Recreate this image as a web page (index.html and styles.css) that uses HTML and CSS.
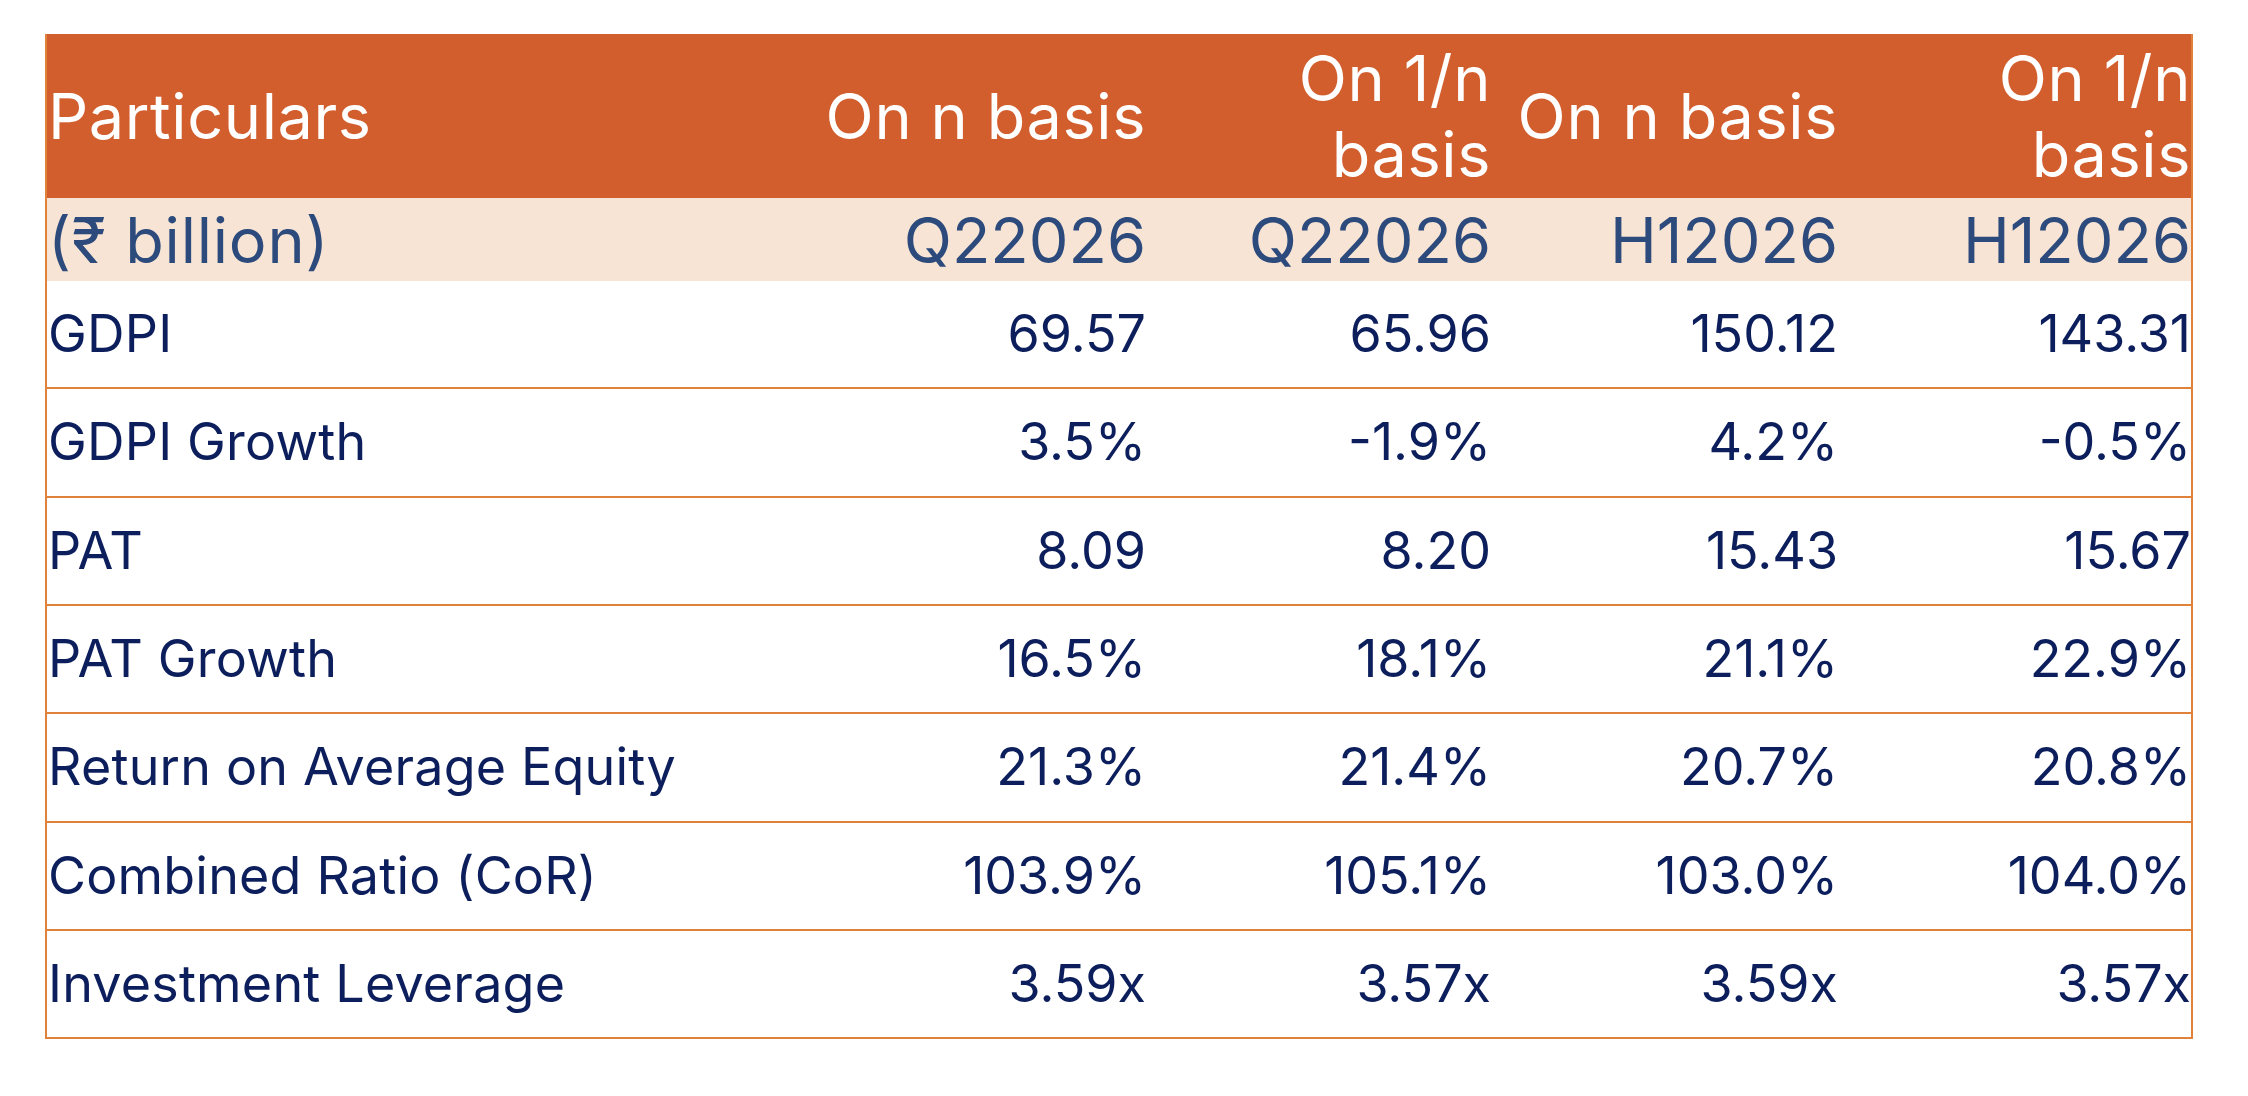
FILE: index.html
```html
<!DOCTYPE html>
<html lang="en">
<head>
<meta charset="utf-8">
<title>Financial Highlights</title>
<link rel="stylesheet" href="styles.css">
</head>
<body>
<div class="page">
  <table class="fin">
    <colgroup>
      <col class="c-label">
      <col class="c-2">
      <col class="c-3">
      <col class="c-4">
      <col class="c-5">
    </colgroup>
    <thead>
      <tr class="head">
        <th class="lbl">Particulars</th>
        <th>On n basis</th>
        <th>On 1/n basis</th>
        <th>On n basis</th>
        <th>On 1/n basis</th>
      </tr>
      <tr class="sub">
        <th class="lbl">(₹ billion)</th>
        <th>Q22026</th>
        <th>Q22026</th>
        <th>H12026</th>
        <th>H12026</th>
      </tr>
    </thead>
    <tbody>
      <tr><td class="lbl">GDPI</td><td>69.57</td><td>65.96</td><td>150.12</td><td>143.31</td></tr>
      <tr><td class="lbl">GDPI Growth</td><td>3.5%</td><td>-1.9%</td><td>4.2%</td><td>-0.5%</td></tr>
      <tr><td class="lbl">PAT</td><td>8.09</td><td>8.20</td><td>15.43</td><td>15.67</td></tr>
      <tr><td class="lbl">PAT Growth</td><td>16.5%</td><td>18.1%</td><td>21.1%</td><td>22.9%</td></tr>
      <tr><td class="lbl">Return on Average Equity</td><td>21.3%</td><td>21.4%</td><td>20.7%</td><td>20.8%</td></tr>
      <tr><td class="lbl">Combined Ratio (CoR)</td><td>103.9%</td><td>105.1%</td><td>103.0%</td><td>104.0%</td></tr>
      <tr><td class="lbl">Investment Leverage</td><td>3.59x</td><td>3.57x</td><td>3.59x</td><td>3.57x</td></tr>
    </tbody>
  </table>
</div>
</body>
</html>
```
FILE: styles.css
```css
html, body {
  margin: 0;
  padding: 0;
  background: #ffffff;
}

.page {
  padding: 34px 0 0 45px;
}

.fin {
  width: 2148px;
  table-layout: fixed;
  border-collapse: separate;
  border-spacing: 0;
  border-left: 2px solid #e0823a;
  border-right: 2px solid #e0823a;
  font-family: "Inter", "Open Sans", sans-serif;
}

.c-label { width: 754px; }
.c-2 { width: 345px; }
.c-3 { width: 345px; }
.c-4 { width: 347px; }
.c-5 { width: 353px; }

.fin th,
.fin td {
  padding: 0;
  text-align: right;
  vertical-align: middle;
  font-weight: 400;
}

.fin .lbl {
  text-align: left;
  padding-left: 1px;
}

.head th {
  background: #d35e2d;
  color: #ffffff;
  font-size: 63px;
  line-height: 76px;
  letter-spacing: 0.6px;
  height: 164px;
  box-sizing: border-box;
}

.sub th {
  background: #f7e4d4;
  color: #2c4a7c;
  font-size: 63px;
  line-height: 76px;
  height: 83px;
  box-sizing: border-box;
}

.sub th.lbl {
  letter-spacing: 0.8px;
}

.fin td {
  color: #0c1f5c;
  font-size: 52px;
  line-height: 64px;
  height: 108.33px;
  box-sizing: border-box;
  border-bottom: 2px solid #e0823a;
}

.fin td.lbl {
  letter-spacing: 0.2px;
}
```
